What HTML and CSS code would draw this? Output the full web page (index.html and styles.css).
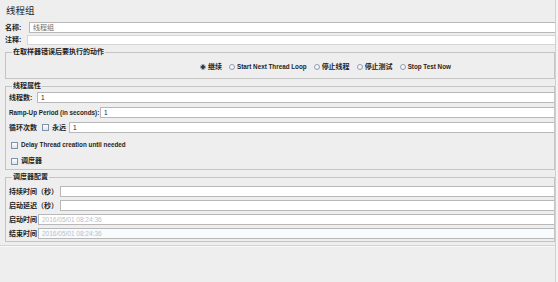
FILE: index.html
```html
<!DOCTYPE html>
<html>
<head>
<meta charset="utf-8">
<link rel="stylesheet" href="styles.css">
</head>
<body>
<div class="panel">
  <div class="title">线程组</div>
  <div class="row name-row">
    <span class="lbl w-name">名称:</span>
    <div class="field gray">线程组</div>
  </div>
  <div class="row comment-row">
    <span class="lbl w-comment">注释:</span>
    <div class="field short"></div>
  </div>

  <fieldset class="group g1">
    <legend>在取样器错误后要执行的动作</legend>
    <div class="radios">
      <span class="opt"><span class="radio on"></span><span class="lbl">继续</span></span>
      <span class="opt"><span class="radio"></span><span class="lbl en">Start Next Thread Loop</span></span>
      <span class="opt"><span class="radio"></span><span class="lbl">停止线程</span></span>
      <span class="opt"><span class="radio"></span><span class="lbl">停止测试</span></span>
      <span class="opt"><span class="radio"></span><span class="lbl en">Stop Test Now</span></span>
    </div>
  </fieldset>

  <fieldset class="group g2">
    <legend>线程属性</legend>
    <div class="row frow r1">
      <span class="lbl w-threads">线程数:</span>
      <div class="field">1</div>
    </div>
    <div class="row frow r2">
      <span class="lbl en w-ramp">Ramp-Up Period (in seconds):</span>
      <div class="field">1</div>
    </div>
    <div class="row frow r3">
      <span class="lbl w-loop">循环次数</span>
      <span class="check"></span>
      <span class="lbl forever">永远</span>
      <div class="field">1</div>
    </div>
    <div class="row crow c1">
      <span class="check"></span>
      <span class="lbl en">Delay Thread creation until needed</span>
    </div>
    <div class="row crow c2">
      <span class="check"></span>
      <span class="lbl">调度器</span>
    </div>
  </fieldset>

  <fieldset class="group g3">
    <legend>调度器配置</legend>
    <div class="row frow s1">
      <span class="lbl w-dur">持续时间（秒）</span>
      <div class="field"></div>
    </div>
    <div class="row frow s2">
      <span class="lbl w-dur">启动延迟（秒）</span>
      <div class="field"></div>
    </div>
    <div class="row frow s3">
      <span class="lbl w-time">启动时间</span>
      <div class="field date">2016/05/01 08:24:36</div>
    </div>
    <div class="row frow s3">
      <span class="lbl w-time">结束时间</span>
      <div class="field date tint">2016/05/01 08:24:36</div>
    </div>
  </fieldset>

  <div class="sep"></div>
</div>
</body>
</html>
```

FILE: styles.css
```css
* {
  box-sizing: border-box;
  margin: 0;
  padding: 0;
}

body {
  margin: 0;
  width: 558px;
  height: 282px;
  overflow: hidden;
  background: #f4f4f4;
  font-family: "Liberation Sans", "Noto Sans CJK SC", sans-serif;
  color: #1e1e1e;
}

.panel {
  width: 556px;
  height: 282px;
  background: #eeeeee;
  border-right: 1px solid #d0d0d0;
  padding: 4px 0 0 5px;
  display: flex;
  flex-direction: column;
}

.title {
  font-size: 9.5px;
  line-height: 14px;
  height: 14px;
  padding-left: 1px;
  color: #222;
}

.row {
  display: flex;
  align-items: center;
}

.lbl {
  font-size: 7px;
  font-weight: bold;
  white-space: nowrap;
  flex: none;
  line-height: 10px;
}

.lbl.en {
  font-size: 6.3px;
}

.field {
  flex: 1;
  height: 11px;
  background: #ffffff;
  border: 1px solid #b8b8b8;
  border-right: none;
  font-size: 6.5px;
  line-height: 9px;
  padding-left: 3px;
  color: #222;
  white-space: nowrap;
  overflow: hidden;
}

.field.gray {
  color: #6c6c6c;
  font-size: 7px;
}

.field.short {
  height: 10px;
  border-color: #d6d6d6;
}

.field.date {
  color: #b6c1cd;
}

.field.tint {
  background: #f7fbfe;
}

.name-row {
  margin-top: 4px;
  height: 11px;
}

.comment-row {
  margin-top: 2px;
  height: 10px;
}

.w-name { width: 24px; }
.w-comment { width: 22px; }
.w-threads { width: 28px; }
.w-ramp { width: 91px; }
.w-loop { width: 33px; }
.w-dur { width: 51px; }
.w-time { width: 29px; }

.forever {
  margin-left: 3px;
  width: 17px;
}

.group {
  border: 1px solid #c4c4c4;
  margin: 3px 0 0 0;
  padding: 0 0 0 3px;
  min-width: 0;
  width: 550px;
}

.group legend {
  font-size: 7px;
  font-weight: bold;
  line-height: 8px;
  padding: 0 1px;
  margin-left: 3px;
  color: #1e1e1e;
}

.g1 {
  padding-top: 6px;
  padding-bottom: 6px;
}

.radios {
  display: flex;
  align-items: center;
  gap: 7px;
  padding-left: 191px;
  height: 10px;
}

.opt {
  display: flex;
  align-items: center;
  gap: 2px;
}

.radio {
  width: 6px;
  height: 6px;
  border-radius: 50%;
  border: 1px solid #8ea0b4;
  background: radial-gradient(circle at 40% 35%, #ffffff, #dbe3ec);
  flex: none;
  position: relative;
}

.radio.on {
  background: radial-gradient(circle, #303a46 0, #303a46 1.6px, #dfe6ee 1.8px);
}

.check {
  width: 7px;
  height: 7px;
  border: 1px solid #8092aa;
  background: linear-gradient(#ffffff, #dde5ee);
  flex: none;
}

.frow {
  height: 11px;
}

.r1 { margin-top: 2px; }
.r2 { margin-top: 4px; }
.r3 { margin-top: 4px; }

.crow {
  height: 10px;
  gap: 3px;
  padding-left: 2px;
}

.c1 { margin-top: 7px; }
.c2 { margin-top: 6px; margin-bottom: 3px; }

.s1 { margin-top: 5px; }
.s2 { margin-top: 3px; }
.s3 { margin-top: 3px; }

.g3 {
  padding-bottom: 2px;
}

.sep {
  margin-top: 3px;
  margin-left: -5px;
  height: 2px;
  border-top: 1px solid #d4d4d4;
  border-bottom: 1px solid #f8f8f8;
}
```
